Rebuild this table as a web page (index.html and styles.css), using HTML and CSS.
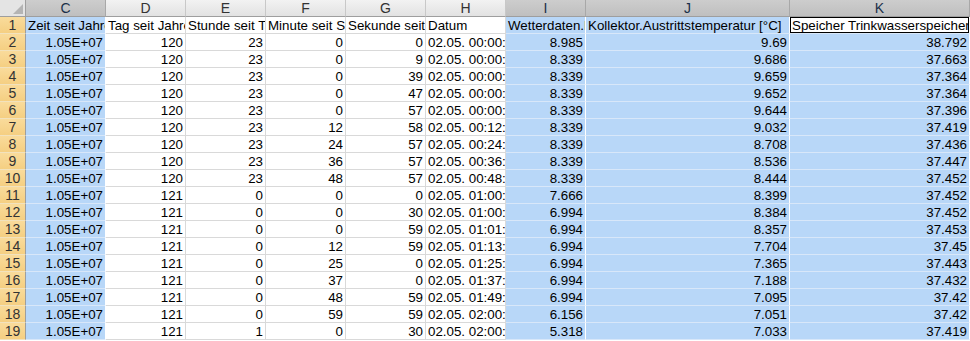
FILE: index.html
```html
<!DOCTYPE html>
<html>
<head>
<meta charset="utf-8">
<link rel="stylesheet" href="styles.css">
</head>
<body>
<div class="sheet">
  <div class="corner"><span class="tri"></span></div>
  <div class="ch sel">C</div><div class="ch">D</div><div class="ch">E</div><div class="ch">F</div><div class="ch">G</div><div class="ch">H</div><div class="ch sel">I</div><div class="ch sel">J</div><div class="ch sel">K</div>

  <div class="rh">1</div><div class="c t s">Zeit seit Jahresbeginn</div><div class="c t">Tag seit Jahresbeginn</div><div class="c t">Stunde seit Tagesbeginn</div><div class="c t">Minute seit Stundenbeginn</div><div class="c t">Sekunde seit Minutenbeginn</div><div class="c t">Datum</div><div class="c t s">Wetterdaten.Lufttemperatur</div><div class="c t s">Kollektor.Austrittstemperatur [°C]</div><div class="c t s last active">Speicher Trinkwasserspeicher.Temperatur</div>

  <div class="rh">2</div><div class="c s">1.05E+07</div><div class="c">120</div><div class="c">23</div><div class="c">0</div><div class="c">0</div><div class="c t">02.05. 00:00:00</div><div class="c s">8.985</div><div class="c s">9.69</div><div class="c s last">38.792</div>
  <div class="rh">3</div><div class="c s">1.05E+07</div><div class="c">120</div><div class="c">23</div><div class="c">0</div><div class="c">9</div><div class="c t">02.05. 00:00:09</div><div class="c s">8.339</div><div class="c s">9.686</div><div class="c s last">37.663</div>
  <div class="rh">4</div><div class="c s">1.05E+07</div><div class="c">120</div><div class="c">23</div><div class="c">0</div><div class="c">39</div><div class="c t">02.05. 00:00:39</div><div class="c s">8.339</div><div class="c s">9.659</div><div class="c s last">37.364</div>
  <div class="rh">5</div><div class="c s">1.05E+07</div><div class="c">120</div><div class="c">23</div><div class="c">0</div><div class="c">47</div><div class="c t">02.05. 00:00:47</div><div class="c s">8.339</div><div class="c s">9.652</div><div class="c s last">37.364</div>
  <div class="rh">6</div><div class="c s">1.05E+07</div><div class="c">120</div><div class="c">23</div><div class="c">0</div><div class="c">57</div><div class="c t">02.05. 00:00:57</div><div class="c s">8.339</div><div class="c s">9.644</div><div class="c s last">37.396</div>
  <div class="rh">7</div><div class="c s">1.05E+07</div><div class="c">120</div><div class="c">23</div><div class="c">12</div><div class="c">58</div><div class="c t">02.05. 00:12:58</div><div class="c s">8.339</div><div class="c s">9.032</div><div class="c s last">37.419</div>
  <div class="rh">8</div><div class="c s">1.05E+07</div><div class="c">120</div><div class="c">23</div><div class="c">24</div><div class="c">57</div><div class="c t">02.05. 00:24:57</div><div class="c s">8.339</div><div class="c s">8.708</div><div class="c s last">37.436</div>
  <div class="rh">9</div><div class="c s">1.05E+07</div><div class="c">120</div><div class="c">23</div><div class="c">36</div><div class="c">57</div><div class="c t">02.05. 00:36:57</div><div class="c s">8.339</div><div class="c s">8.536</div><div class="c s last">37.447</div>
  <div class="rh">10</div><div class="c s">1.05E+07</div><div class="c">120</div><div class="c">23</div><div class="c">48</div><div class="c">57</div><div class="c t">02.05. 00:48:57</div><div class="c s">8.339</div><div class="c s">8.444</div><div class="c s last">37.452</div>
  <div class="rh">11</div><div class="c s">1.05E+07</div><div class="c">121</div><div class="c">0</div><div class="c">0</div><div class="c">0</div><div class="c t">02.05. 01:00:00</div><div class="c s">7.666</div><div class="c s">8.399</div><div class="c s last">37.452</div>
  <div class="rh">12</div><div class="c s">1.05E+07</div><div class="c">121</div><div class="c">0</div><div class="c">0</div><div class="c">30</div><div class="c t">02.05. 01:00:30</div><div class="c s">6.994</div><div class="c s">8.384</div><div class="c s last">37.452</div>
  <div class="rh">13</div><div class="c s">1.05E+07</div><div class="c">121</div><div class="c">0</div><div class="c">0</div><div class="c">59</div><div class="c t">02.05. 01:01:59</div><div class="c s">6.994</div><div class="c s">8.357</div><div class="c s last">37.453</div>
  <div class="rh">14</div><div class="c s">1.05E+07</div><div class="c">121</div><div class="c">0</div><div class="c">12</div><div class="c">59</div><div class="c t">02.05. 01:13:59</div><div class="c s">6.994</div><div class="c s">7.704</div><div class="c s last">37.45</div>
  <div class="rh">15</div><div class="c s">1.05E+07</div><div class="c">121</div><div class="c">0</div><div class="c">25</div><div class="c">0</div><div class="c t">02.05. 01:25:00</div><div class="c s">6.994</div><div class="c s">7.365</div><div class="c s last">37.443</div>
  <div class="rh">16</div><div class="c s">1.05E+07</div><div class="c">121</div><div class="c">0</div><div class="c">37</div><div class="c">0</div><div class="c t">02.05. 01:37:00</div><div class="c s">6.994</div><div class="c s">7.188</div><div class="c s last">37.432</div>
  <div class="rh">17</div><div class="c s">1.05E+07</div><div class="c">121</div><div class="c">0</div><div class="c">48</div><div class="c">59</div><div class="c t">02.05. 01:49:59</div><div class="c s">6.994</div><div class="c s">7.095</div><div class="c s last">37.42</div>
  <div class="rh">18</div><div class="c s">1.05E+07</div><div class="c">121</div><div class="c">0</div><div class="c">59</div><div class="c">59</div><div class="c t">02.05. 02:00:59</div><div class="c s">6.156</div><div class="c s">7.051</div><div class="c s last">37.42</div>
  <div class="rh">19</div><div class="c s">1.05E+07</div><div class="c">121</div><div class="c">1</div><div class="c">0</div><div class="c">30</div><div class="c t">02.05. 02:00:30</div><div class="c s">5.318</div><div class="c s">7.033</div><div class="c s last">37.419</div>
</div>
</body>
</html>
```

FILE: styles.css
```css
html, body {
  margin: 0;
  padding: 0;
  background: #ffffff;
  overflow: hidden;
}

.sheet {
  display: grid;
  grid-template-columns: 26px repeat(7, 80px) 204px 180px;
  grid-auto-rows: 17px;
  width: 970px;
  font-family: "Liberation Sans", Arial, sans-serif;
  font-size: 13.33px;
  color: #000;
}

.corner {
  position: relative;
  background: #e4e4e4;
  border-right: 1px solid #9e9e9e;
  border-bottom: 1px solid #9e9e9e;
  box-sizing: border-box;
}

.tri {
  position: absolute;
  right: 2px;
  bottom: 2px;
  width: 0;
  height: 0;
  border-left: 10px solid transparent;
  border-bottom: 10px solid #b4b4b4;
}

.ch {
  box-sizing: border-box;
  background: linear-gradient(#f2f2f2, #e2e2e2);
  border-right: 1px solid #c8c8c8;
  border-bottom: 1px solid #9e9e9e;
  text-align: center;
  font-size: 14px;
  line-height: 16px;
  color: #333;
}

.ch.sel {
  background: linear-gradient(#cdcdcd, #bfbfbf);
  border-right: 1px solid #a8a8a8;
  color: #1b3049;
}

.rh {
  box-sizing: border-box;
  background: linear-gradient(#f9db9b, #f5cf82);
  border-right: 1px solid #9e9e9e;
  border-bottom: 1px solid #f2e2bd;
  text-align: center;
  font-size: 14px;
  line-height: 17px;
  color: #333;
}

.c {
  box-sizing: border-box;
  border-right: 1px solid #d9d9d9;
  border-bottom: 1px solid #d9d9d9;
  padding: 1px 2px 0 2px;
  line-height: 15px;
  text-align: right;
  white-space: nowrap;
  overflow: hidden;
  text-overflow: clip;
}

.c.t {
  text-align: left;
  padding-right: 0;
}

.c.s {
  background: #b8d7f8;
  border-right: 1px solid #ffffff;
  border-bottom: 1px solid #d8e7f9;
}

.c.active {
  background: #ffffff;
  box-shadow: inset 0 0 0 1px #000;
  border-bottom: 1px solid #d8e7f9;
}
```
